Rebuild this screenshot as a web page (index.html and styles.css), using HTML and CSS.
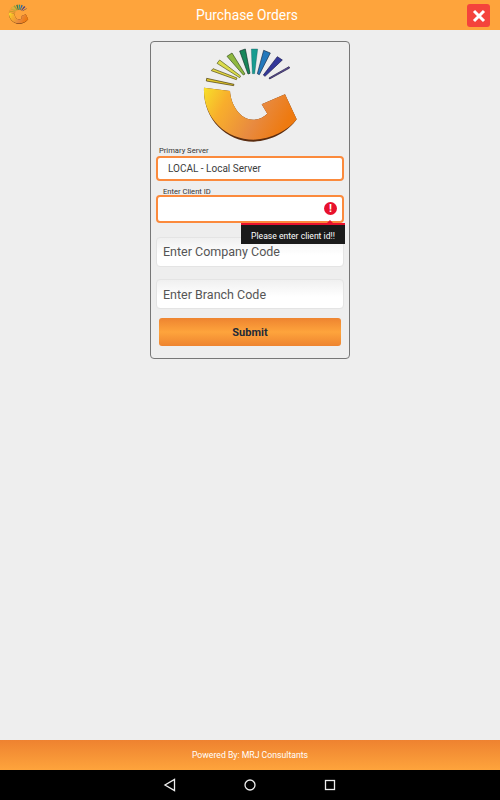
FILE: index.html
```html
<!DOCTYPE html>
<html lang="en">
<head>
    <meta charset="UTF-8">
    <meta name="viewport" content="width=device-width, initial-scale=1.0">
    <title>Purchase Orders</title>
    <link rel="stylesheet" href="styles.css">
</head>
<body>
    <svg class="defs" width="0" height="0" aria-hidden="true">
        <defs>
            <linearGradient id="swoosh" x1="0" y1="0" x2="1" y2="0.3">
                <stop offset="0" stop-color="#f7e02a"/>
                <stop offset="0.28" stop-color="#f8ae2c"/>
                <stop offset="0.68" stop-color="#e88a40"/>
                <stop offset="1" stop-color="#ee7a10"/>
            </linearGradient>
            <symbol id="logo" viewBox="0 0 360 330">
                <polygon points="50,112 49,120 131,134 132,130" fill="#e3c92a" stroke="#3e300c" stroke-width="2"/>
                <polygon points="64,89 69,83 141,111 139,116" fill="#e4d843" stroke="#4a4210" stroke-width="2"/>
                <polygon points="81,67 89,57 152,105 149,110" fill="#dcdc4c" stroke="#4c5418" stroke-width="2"/>
                <polygon points="111,46 126,36 165,99 160,102" fill="#8fb83f" stroke="#2f4c18" stroke-width="2"/>
                <polygon points="149,30 166,24 180,97 174,99" fill="#17865a" stroke="#0e2e28" stroke-width="2"/>
                <polygon points="184,24 203,24 194,98 187,98" fill="#179c90" stroke="#0f4a50" stroke-width="1"/>
                <polygon points="221,28 241,36 208,101 202,98" fill="#2378bc" stroke="#142a48" stroke-width="2"/>
                <polygon points="262,47 277,57 225,106 220,102" fill="#33389a" stroke="#12124a" stroke-width="2"/>
                <polygon points="297,77 299,81 239,114 237,111" fill="#5f50a0" stroke="#1a1438" stroke-width="2"/>
                <path d="M42 140 L120 150 C122 190 150 238 192 236 C207 235 222 228 232 218 L215 190 L285 160 L320 235 C295 272 245 300 192 302 C105 302 38 230 42 140 Z" fill="#5a2c10"/>
                <path d="M42 140 L120 150 C122 190 150 238 192 236 C207 235 222 228 232 218 L215 190 L285 160 L320 235 C295 268 245 294 192 296 C105 296 38 228 42 140 Z" fill="url(#swoosh)"/>
            </symbol>
        </defs>
    </svg>

    <header class="top-bar">
        <svg class="top-logo"><use href="#logo"/></svg>
        <h1>Purchase Orders</h1>
        <button class="close-btn" type="button" aria-label="Close">
            <svg viewBox="0 0 22 22" width="22" height="22">
                <path d="M6 6 L16 16 M16 6 L6 16" stroke="#fff" stroke-width="3"/>
            </svg>
        </button>
    </header>

    <main class="content">
        <form class="login-card">
            <svg class="card-logo"><use href="#logo"/></svg>

            <label class="field-label" for="server">Primary Server</label>
            <input class="field field-active server-field" id="server" type="text" value="LOCAL - Local Server">

            <label class="field-label client-label" for="client">Enter Client ID</label>
            <div class="client-wrap">
                <input class="field field-active client-field" id="client" type="text">
                <span class="error-icon">!</span>
                <div class="error-tip">Please enter client id!!</div>
            </div>

            <input class="field plain-field" type="text" placeholder="Enter Company Code">
            <input class="field plain-field" type="text" placeholder="Enter Branch Code">

            <button class="btn" type="button">Submit</button>
        </form>
    </main>

    <footer class="bottom-bar">Powered By: MRJ Consultants</footer>

    <nav class="nav-bar">
        <svg viewBox="0 0 14 14" width="14" height="14"><path d="M11.5 1.5 V12.5 L2 7 Z" fill="none" stroke="#eee" stroke-width="1.3"/></svg>
        <svg viewBox="0 0 14 14" width="14" height="14"><circle cx="7" cy="7" r="5" fill="none" stroke="#eee" stroke-width="1.3"/></svg>
        <svg viewBox="0 0 14 14" width="14" height="14"><rect x="2.5" y="2.5" width="9" height="9" fill="none" stroke="#eee" stroke-width="1.3"/></svg>
    </nav>
</body>
</html>
```

FILE: styles.css
```css
* {
    margin: 0;
    padding: 0;
    box-sizing: border-box;
}

body {
    width: 500px;
    height: 800px;
    display: flex;
    flex-direction: column;
    background-color: #eeeeee;
    font-family: 'Roboto', sans-serif;
    overflow: hidden;
}

.defs {
    position: absolute;
}

.top-bar {
    height: 30px;
    flex-shrink: 0;
    position: relative;
    display: flex;
    align-items: center;
    justify-content: center;
    padding-right: 6px;
    background-color: #fea43c;
}

.top-bar h1 {
    font-size: 13.8px;
    font-weight: 400;
    color: #fff;
}

.top-logo {
    position: absolute;
    left: 6px;
    top: 3px;
    width: 25px;
    height: 23px;
}

.close-btn {
    position: absolute;
    left: 467px;
    top: 4px;
    width: 23px;
    height: 23px;
    border: none;
    border-radius: 3px;
    background-color: #f4433c;
    display: flex;
    align-items: center;
    justify-content: center;
}

.content {
    flex: 1;
    display: flex;
    justify-content: center;
    align-items: flex-start;
    padding-top: 11px;
}

.login-card {
    width: 200px;
    height: 318px;
    padding: 0 5px;
    display: flex;
    flex-direction: column;
    border: 1px solid #777;
    border-radius: 4px;
    background-color: #eeeeee;
}

.card-logo {
    width: 120px;
    height: 110px;
    align-self: center;
    flex-shrink: 0;
    margin-top: -1px;
    margin-bottom: -3px;
}

.field-label {
    font-size: 7.6px;
    line-height: 6px;
    height: 8px;
    color: #333;
    padding-left: 3px;
}

.client-label {
    padding-left: 7px;
    margin-top: 8px;
    height: 6px;
}

.field {
    display: block;
    width: 188px;
    border-radius: 4px;
    font-family: 'Roboto', sans-serif;
    outline: none;
    color: #3c3c3c;
}

.field-active {
    border: 2px solid #fb8a3c;
    background-color: #fff;
}

.server-field {
    height: 25px;
    padding-left: 10px;
    font-size: 10px;
}

.client-wrap {
    position: relative;
    height: 28px;
}

.client-field {
    height: 28px;
}

.error-icon {
    position: absolute;
    left: 168px;
    top: 7px;
    width: 13px;
    height: 13px;
    border-radius: 50%;
    background-color: #e8112d;
    color: #fff;
    font-size: 11px;
    font-weight: 700;
    line-height: 13px;
    text-align: center;
}

/* tooltip sits over the company field */
.error-tip {
    position: absolute;
    left: 85px;
    top: 28px;
    width: 104px;
    height: 21px;
    border-top: 2px solid #e8112d;
    background-color: #1a1a1a;
    color: #fff;
    font-size: 8.6px;
    line-height: 22px;
    text-align: center;
}

.error-tip::before {
    content: "";
    position: absolute;
    left: 86px;
    top: -5px;
    border-left: 3px solid transparent;
    border-right: 3px solid transparent;
    border-bottom: 3px solid #e8112d;
}

.plain-field {
    height: 30px;
    margin-top: 14px;
    padding: 0 0 2px 6px;
    font-size: 12.5px;
    border: 1px solid #e4e4e4;
    background: linear-gradient(#f0f0f0, #fff 60%);
}

.plain-field + .plain-field {
    margin-top: 12px;
    padding-bottom: 0;
}

.plain-field::placeholder {
    color: #555;
    opacity: 1;
}

.btn {
    width: 182px;
    height: 28px;
    margin: 9px 0 0 3px;
    padding-top: 1px;
    border: none;
    border-radius: 3px;
    background: linear-gradient(#ee8430, #fea43c 50%, #ee8430);
    color: #1f2a38;
    font-family: 'Roboto', sans-serif;
    font-size: 11px;
    font-weight: 700;
}

.bottom-bar {
    height: 30px;
    flex-shrink: 0;
    display: flex;
    align-items: center;
    justify-content: center;
    background: linear-gradient(#ee8230, #fea43c);
    color: #fff;
    font-size: 8.7px;
}

.nav-bar {
    height: 30px;
    flex-shrink: 0;
    display: flex;
    align-items: center;
    justify-content: center;
    gap: 66px;
    background-color: #000;
}
```
